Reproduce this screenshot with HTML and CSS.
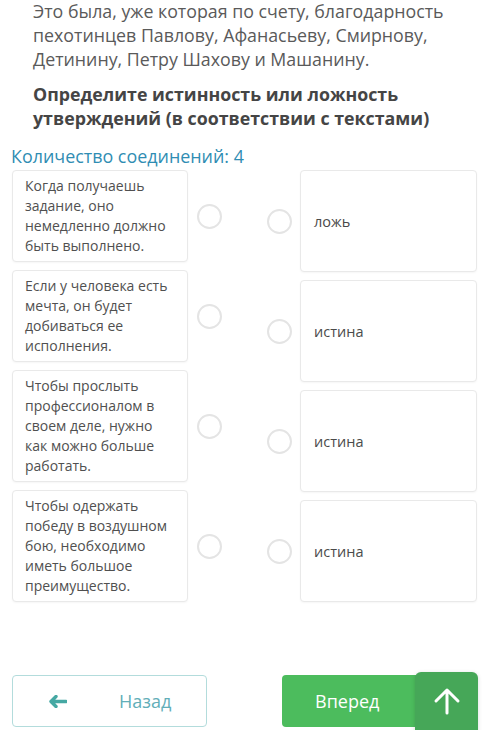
FILE: index.html
```html
<!DOCTYPE html>
<html lang="ru">
<head>
    <meta charset="UTF-8">
    <title>Соединения</title>
    <link rel="stylesheet" href="styles.css">
</head>
<body>
    <!-- Reading passage and task -->
    <div class="task">
        <p class="passage">Это была, уже которая по счету, благодарность пехотинцев Павлову, Афанасьеву, Смирнову, Детинину, Петру Шахову и Машанину.</p>
        <p class="question">Определите истинность или ложность утверждений (в соответствии с текстами)</p>
    </div>

    <p class="match-count">Количество соединений: 4</p>

    <!-- Matching board: statements on the left, answers on the right -->
    <div class="board">
        <div class="column left-column">
            <div class="item">
                <div class="card statement">Когда получаешь задание, оно немедленно должно быть выполнено.</div>
                <span class="dot"></span>
            </div>
            <div class="item">
                <div class="card statement">Если у человека есть мечта, он будет добиваться ее исполнения.</div>
                <span class="dot"></span>
            </div>
            <div class="item">
                <div class="card statement">Чтобы прослыть профессионалом в своем деле, нужно как можно больше работать.</div>
                <span class="dot"></span>
            </div>
            <div class="item">
                <div class="card statement">Чтобы одержать победу в воздушном бою, необходимо иметь большое преимущество.</div>
                <span class="dot"></span>
            </div>
        </div>

        <div class="column right-column">
            <div class="item">
                <span class="dot"></span>
                <div class="card answer">ложь</div>
            </div>
            <div class="item">
                <span class="dot"></span>
                <div class="card answer">истина</div>
            </div>
            <div class="item">
                <span class="dot"></span>
                <div class="card answer">истина</div>
            </div>
            <div class="item">
                <span class="dot"></span>
                <div class="card answer">истина</div>
            </div>
        </div>
    </div>

    <!-- Navigation -->
    <div class="nav">
        <button class="btn btn-back">
            <svg class="back-icon" width="18" height="13" viewBox="0 0 18 13">
                <path d="M7 1.5 L2 6.5 L7 11.5 M2.5 6.5 H17" fill="none" stroke="#45a8a3" stroke-width="3.4" stroke-linecap="round" stroke-linejoin="round"/>
            </svg>
            <span>Назад</span>
        </button>
        <button class="btn btn-next">Вперед</button>
    </div>

    <!-- Floating scroll-to-top button -->
    <button class="to-top">
        <svg width="28" height="28" viewBox="0 0 28 28">
            <path d="M14 26 V3 M3 14 L14 3 L25 14" fill="none" stroke="#fff" stroke-width="3" stroke-linecap="round" stroke-linejoin="round"/>
        </svg>
    </button>
</body>
</html>
```

FILE: styles.css
```css
/* Reset */
* {
    box-sizing: border-box;
    margin: 0;
    padding: 0;
}

body {
    font-family: "Open Sans", "Noto Sans", sans-serif;
    background-color: #fff;
    color: #555;
    padding: 0 23px 0 12px;
    position: relative;
    height: 730px;
    overflow: hidden;
}

/* Passage and question */
.task {
    padding-left: 21px;
    margin-top: -1px;
}

.passage {
    font-size: 17.8px;
    line-height: 24px;
    color: #5a5a5a;
}

.question {
    font-size: 17.8px;
    line-height: 24px;
    font-weight: 700;
    color: #454545;
    margin-top: 11px;
}

.match-count {
    font-size: 17.9px;
    line-height: 24px;
    color: #2f8db3;
    margin-top: 14px;
    margin-left: -1px;
}

/* Matching board */
.board {
    display: flex;
    justify-content: space-between;
    margin-top: 2px;
}

.column {
    display: flex;
    flex-direction: column;
    gap: 8px;
}

.item {
    display: flex;
    align-items: center;
}

.card {
    background-color: #fff;
    border: 1px solid #e9e9e9;
    border-radius: 4px;
    box-shadow: 0 1px 2px rgba(0, 0, 0, 0.04);
}

.statement {
    width: 176px;
    padding: 5px 12px;
    font-size: 14px;
    line-height: 20px;
    color: #505050;
}

.answer {
    width: 177px;
    height: 102px;
    display: flex;
    align-items: center;
    padding-left: 13px;
    font-size: 14.5px;
    color: #4a4a4a;
}

/* Connection dots */
.dot {
    width: 25px;
    height: 25px;
    border: 2px solid #e4e4e4;
    border-radius: 50%;
    flex-shrink: 0;
}

.left-column .dot {
    margin-left: 9px;
}

.right-column .dot {
    margin-right: 8px;
}

/* Navigation buttons */
.nav {
    display: flex;
    justify-content: space-between;
    margin-top: 73px;
}

.btn {
    width: 195px;
    height: 52px;
    border-radius: 4px;
    font-family: inherit;
    font-size: 18px;
    cursor: pointer;
    display: flex;
    align-items: center;
}

.btn-back {
    background-color: #fff;
    border: 1px solid #b3dcdc;
    color: #62aeb8;
    padding-left: 36px;
}

.btn-back span {
    margin-left: 52px;
}

.btn-next {
    background-color: #4cbc5d;
    border: none;
    color: #fff;
    padding-left: 33px;
}

.to-top {
    position: absolute;
    left: 415px;
    top: 672px;
    width: 63px;
    height: 66px;
    border: none;
    border-radius: 6px;
    background-color: #46a758;
    display: flex;
    justify-content: center;
    padding-top: 15px;
    box-shadow: 0 1px 4px rgba(0, 0, 0, 0.15);
    cursor: pointer;
}
```
